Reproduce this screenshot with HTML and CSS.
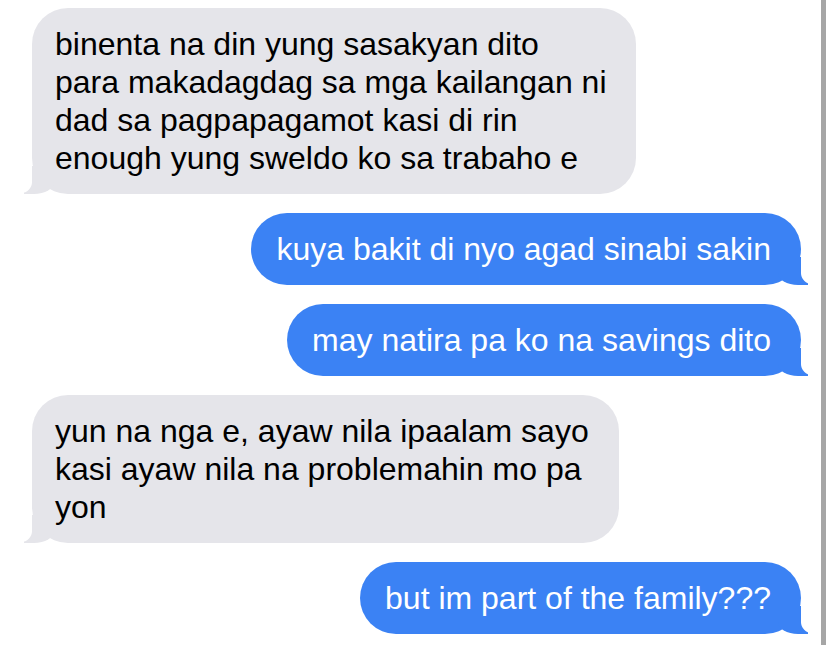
FILE: index.html
```html
<!DOCTYPE html>
<html lang="tl">
<head>
  <meta charset="UTF-8" />
  <meta name="viewport" content="width=device-width, initial-scale=1.0" />
  <title>Messages</title>
  <link rel="stylesheet" href="styles.css">
</head>
<body>
  <div class="screen">
    <div class="chat">
      <p class="bubble them">binenta na din yung sasakyan dito<br>para makadagdag sa mga kailangan ni<br>dad sa pagpapagamot kasi di rin<br>enough yung sweldo ko sa trabaho e</p>
      <p class="bubble me">kuya bakit di nyo agad sinabi sakin</p>
      <p class="bubble me">may natira pa ko na savings dito</p>
      <p class="bubble them">yun na nga e, ayaw nila ipaalam sayo<br>kasi ayaw nila na problemahin mo pa<br>yon</p>
      <p class="bubble me">but im part of the family???</p>
    </div>
    <div class="scrollbar"></div>
  </div>
</body>
</html>
```

FILE: styles.css
```css
body {
  margin: 0;
  background-color: #fff;
  font-family: 'Liberation Sans', Arial, sans-serif;
}

.screen {
  display: flex;
  height: 645px;
  overflow: hidden;
}

.chat {
  flex: 1;
  display: flex;
  flex-direction: column;
  gap: 19px;
  padding-top: 8px;
}

.scrollbar {
  width: 5px;
  margin-right: 1px;
  background-color: #a6a6a6;
}

/* burbujas de mensaje */
.bubble {
  position: relative;
  margin: 0;
  width: fit-content;
  padding: 17px 30px 17px 23px;
  border-radius: 36px;
  font-size: 32px;
  line-height: 38px;
}

.bubble::before,
.bubble::after {
  content: "";
  position: absolute;
  bottom: 0;
  height: 28px;
}

.them {
  margin-left: 32px;
  background-color: #e5e5ea;
  color: #000;
}

.them::before {
  left: -8px;
  border-left: 30px solid #e5e5ea;
  border-bottom-right-radius: 20px 12px;
}

.them::after {
  left: -12px;
  width: 12px;
  background-color: #fff;
  border-bottom-right-radius: 11px;
  transform: translateY(-1px);
}

.me {
  align-self: flex-end;
  margin-right: 20px;
  padding: 17px 30px 17px 25px;
  background-color: #3b82f4;
  color: #fff;
}

.me::before {
  right: -7px;
  border-right: 30px solid #3b82f4;
  border-bottom-left-radius: 20px 12px;
}

.me::after {
  right: -12px;
  width: 12px;
  background-color: #fff;
  border-bottom-left-radius: 11px;
  transform: translateY(-1px);
}
```
